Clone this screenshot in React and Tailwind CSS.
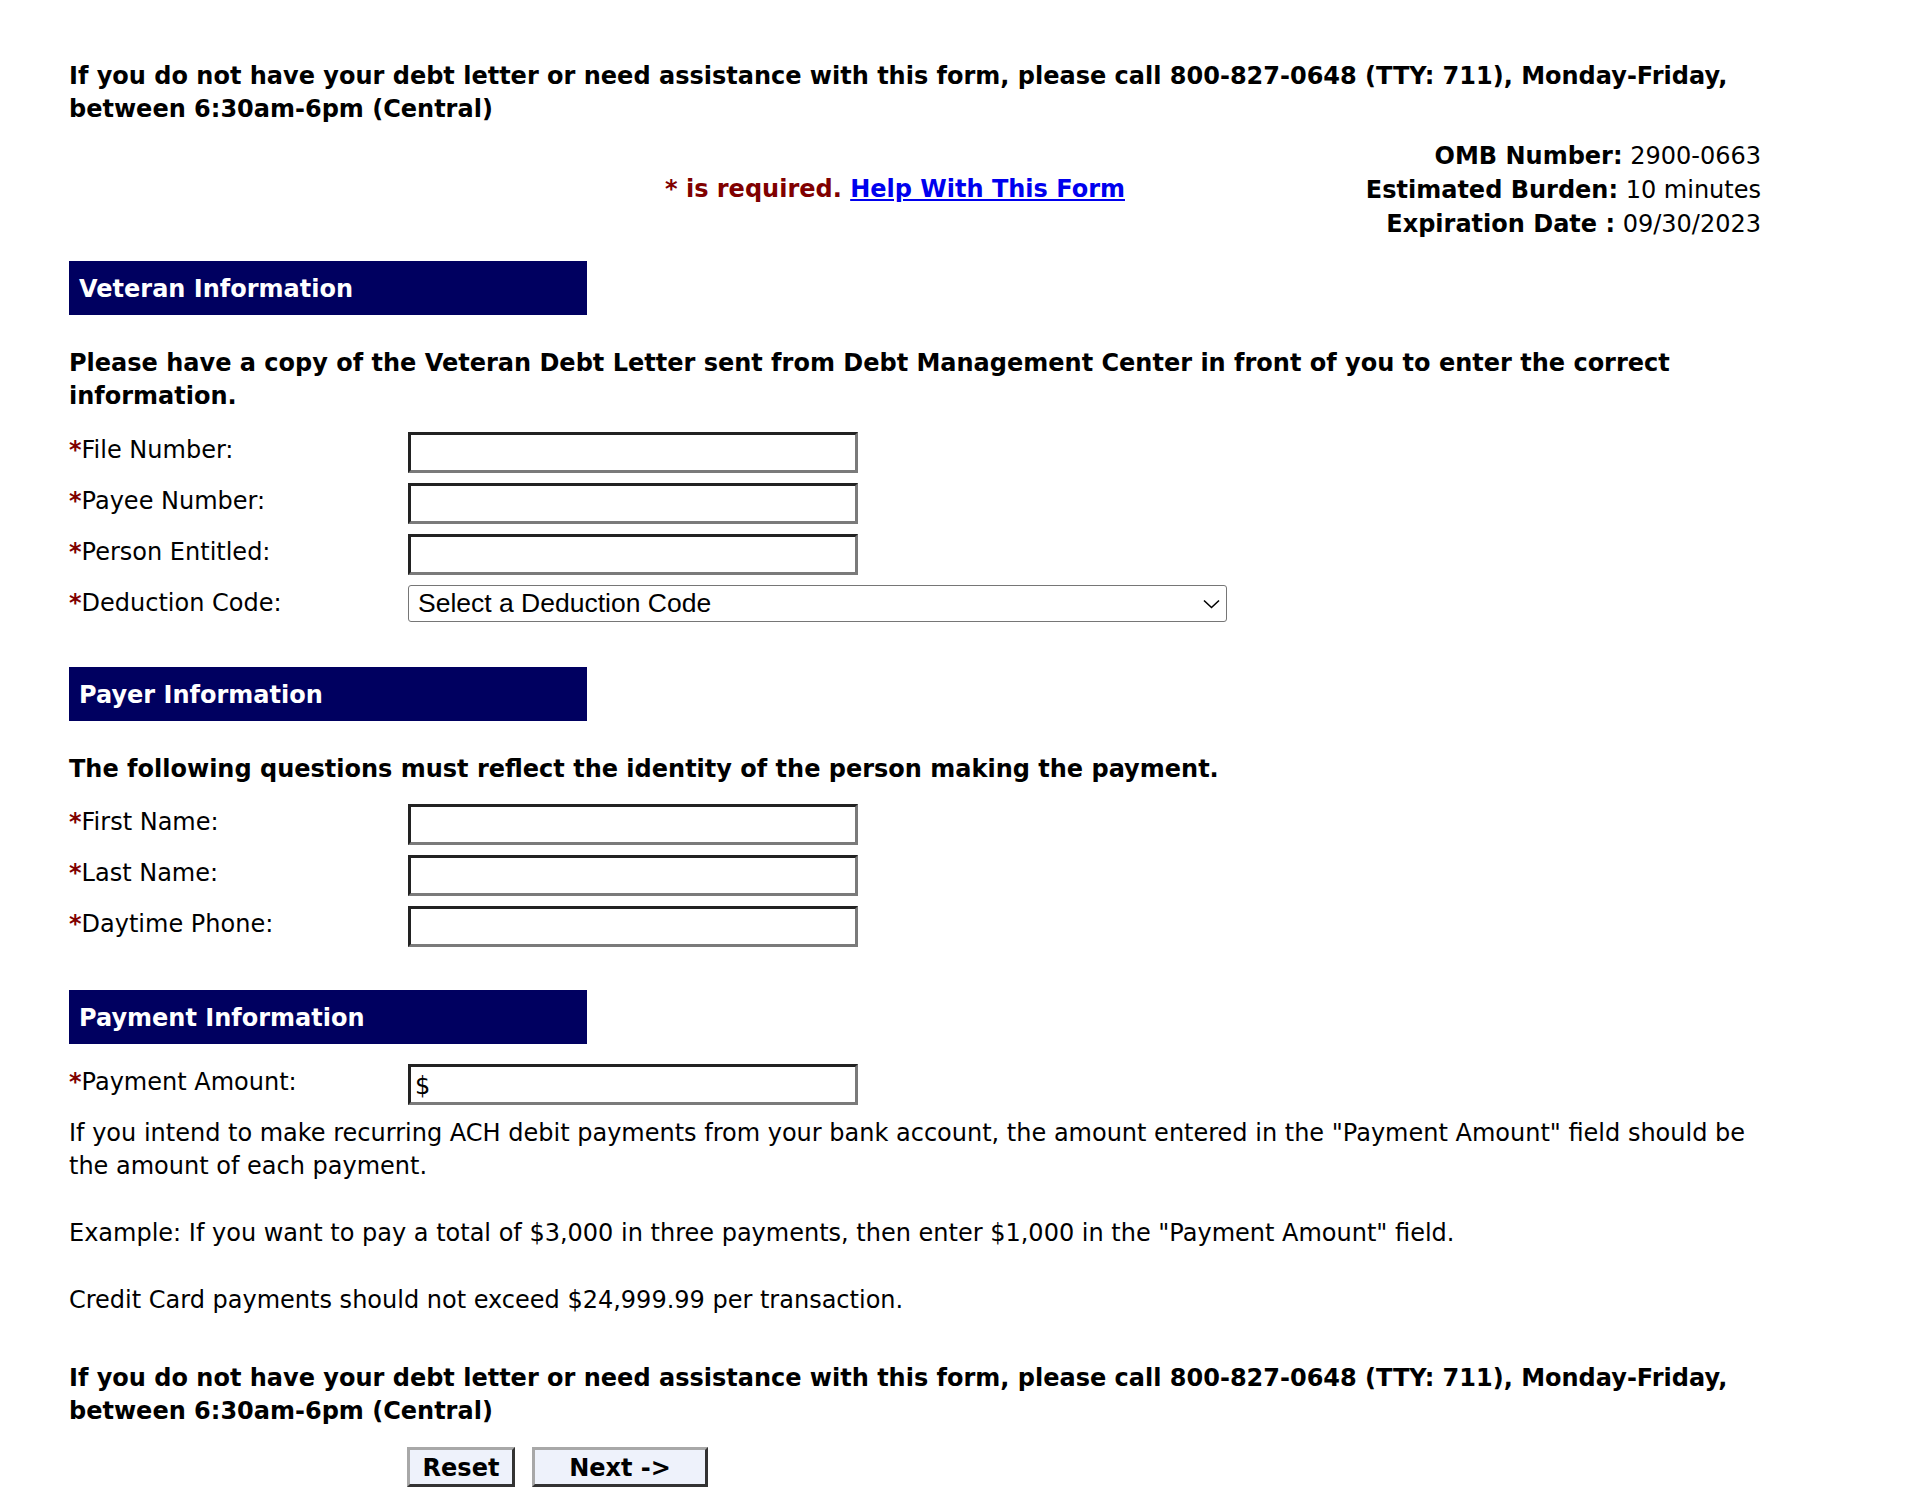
import React from "react";

function Header({ children, className = "" }) {
  return (
    <div className={"flex h-[54px] w-[518px] items-center bg-[#000060] pl-[10px] pt-[2px] font-bold text-white " + className}>
      {children}
    </div>
  );
}

function Row({ label, children, className = "" }) {
  return (
    <div className={"flex items-start " + className}>
      <div className="w-[339px] shrink-0 pt-[2px]">
        <span className="font-bold text-[#800000]">*</span>
        {label}
      </div>
      {children}
    </div>
  );
}

function TextBox({ defaultValue }) {
  return (
    <input
      type="text"
      defaultValue={defaultValue}
      className="h-[41px] w-[450px] border-[3px] border-t-[#222222] border-l-[#222222] border-b-[#7a7a7a] border-r-[#7a7a7a] bg-white px-[4px] pt-[3px] font-['DejaVu_Sans',Verdana,sans-serif] text-[24px] leading-none text-black outline-none"
    />
  );
}

export default function App() {
  return (
    <div className="min-h-[1502px] bg-white font-['DejaVu_Sans',Verdana,sans-serif] text-[24px] leading-[33px] text-black">
      <div className="ml-[69px] w-[1692px] pt-[60px]">
        <p className="whitespace-nowrap font-bold">
          If you do not have your debt letter or need assistance with this form, please call 800-827-0648 (TTY: 711), Monday-Friday,
          <br />
          between 6:30am-6pm (Central)
        </p>

        <div className="mt-[11px] flex items-center">
          <div className="flex-1 pl-[596px] font-bold text-[#800000]">
            * is required.{" "}
            <a href="#" className="text-[#0000ee] underline">
              Help With This Form
            </a>
          </div>
          <div className="pt-[2px] text-right leading-[34px]">
            <div>
              <span className="font-bold">OMB Number:</span> 2900-0663
            </div>
            <div>
              <span className="font-bold">Estimated Burden:</span> 10 minutes
            </div>
            <div>
              <span className="font-bold">Expiration Date :</span> 09/30/2023
            </div>
          </div>
        </div>

        <Header className="mt-[20px]">Veteran Information</Header>

        <p className="mt-[32px] whitespace-nowrap font-bold">
          Please have a copy of the Veteran Debt Letter sent from Debt Management Center in front of you to enter the correct
          <br />
          information.
        </p>

        <Row label="File Number:" className="mt-[19px]">
          <TextBox />
        </Row>
        <Row label="Payee Number:" className="mt-[10px]">
          <TextBox />
        </Row>
        <Row label="Person Entitled:" className="mt-[10px]">
          <TextBox />
        </Row>
        <Row label="Deduction Code:" className="mt-[10px]">
          <div className="relative w-[819px]">
            <select className="h-[37px] w-full appearance-none rounded-[3px] border border-[#767676] bg-white pl-[9px] font-['Liberation_Sans',Arial,sans-serif] text-[26.5px] leading-none text-black outline-none">
              <option>Select a Deduction Code</option>
            </select>
            <svg
              className="pointer-events-none absolute right-[7px] top-[14px]"
              width="17"
              height="10"
              viewBox="0 0 17 10"
              fill="none"
            >
              <polyline points="1,1.5 8.5,8.5 16,1.5" stroke="#000" strokeWidth="1.6" />
            </svg>
          </div>
        </Row>

        <Header className="mt-[45px]">Payer Information</Header>

        <p className="mt-[32px] whitespace-nowrap font-bold">
          The following questions must reflect the identity of the person making the payment.
        </p>

        <Row label="First Name:" className="mt-[18px]">
          <TextBox />
        </Row>
        <Row label="Last Name:" className="mt-[10px]">
          <TextBox />
        </Row>
        <Row label="Daytime Phone:" className="mt-[10px]">
          <TextBox />
        </Row>

        <Header className="mt-[43px]">Payment Information</Header>

        <Row label="Payment Amount:" className="mt-[20px]">
          <TextBox defaultValue="$" />
        </Row>

        <p className="mt-[12px] whitespace-nowrap">
          If you intend to make recurring ACH debit payments from your bank account, the amount entered in the "Payment Amount" field should be
          <br />
          the amount of each payment.
        </p>
        <p className="mt-[34px] whitespace-nowrap">
          Example: If you want to pay a total of $3,000 in three payments, then enter $1,000 in the "Payment Amount" field.
        </p>
        <p className="mt-[34px] whitespace-nowrap">Credit Card payments should not exceed $24,999.99 per transaction.</p>

        <p className="mt-[45px] whitespace-nowrap font-bold">
          If you do not have your debt letter or need assistance with this form, please call 800-827-0648 (TTY: 711), Monday-Friday,
          <br />
          between 6:30am-6pm (Central)
        </p>

        <div className="ml-[338px] mt-[19px] flex gap-[17px]">
          <button className="h-[40px] w-[108px] border-[3px] border-t-[#a8a8a8] border-l-[#a8a8a8] border-b-[#333333] border-r-[#333333] bg-[#eef2fb] pt-[2px] font-bold text-[24px] leading-none text-black">
            Reset
          </button>
          <button className="h-[40px] w-[176px] border-[3px] border-t-[#a8a8a8] border-l-[#a8a8a8] border-b-[#333333] border-r-[#333333] bg-[#eef2fb] pt-[2px] font-bold text-[24px] leading-none text-black">
            Next -&gt;
          </button>
        </div>
      </div>
    </div>
  );
}
